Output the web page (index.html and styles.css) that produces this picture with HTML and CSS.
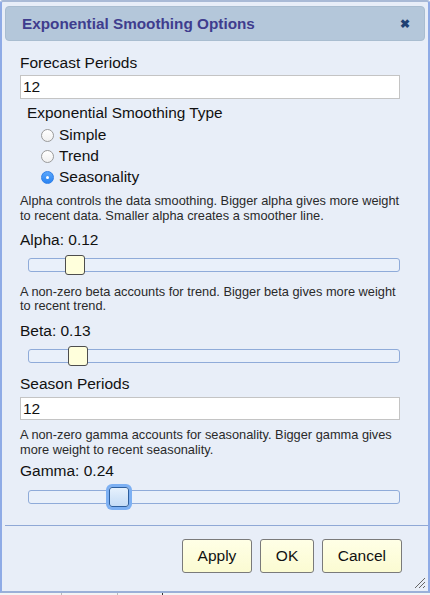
FILE: index.html
```html
<!DOCTYPE html>
<html>
<head>
<meta charset="utf-8">
<link rel="stylesheet" href="styles.css">
</head>
<body>
<div class="dialog">
  <div class="titlebar">
    <span class="title">Exponential Smoothing Options</span>
    <span class="close">&#x2716;</span>
  </div>
  <div class="content">
    <div class="label first">Forecast Periods</div>
    <div class="input">12</div>
    <div class="type-label">Exponential Smoothing Type</div>
    <div class="radios">
      <div class="radio"><span class="circle"></span>Simple</div>
      <div class="radio"><span class="circle"></span>Trend</div>
      <div class="radio"><span class="circle checked"></span>Seasonality</div>
    </div>
    <p class="desc d-alpha">Alpha controls the data smoothing. Bigger alpha gives more weight to recent data. Smaller alpha creates a smoother line.</p>
    <div class="label l-alpha">Alpha: 0.12</div>
    <div class="slider"><div class="track"></div><div class="handle" style="left:37px"></div></div>
    <p class="desc d-beta">A non-zero beta accounts for trend. Bigger beta gives more weight to recent trend.</p>
    <div class="label l-beta">Beta: 0.13</div>
    <div class="slider"><div class="track"></div><div class="handle" style="left:40px"></div></div>
    <div class="label l-season">Season Periods</div>
    <div class="input season">12</div>
    <p class="desc d-gamma">A non-zero gamma accounts for seasonality. Bigger gamma gives more weight to recent seasonality.</p>
    <div class="label l-gamma">Gamma: 0.24</div>
    <div class="slider s-gamma"><div class="track"></div><div class="handle focus" style="left:81px"></div></div>
  </div>
  <div class="footer">
    <button class="btn">Apply</button>
    <button class="btn">OK</button>
    <button class="btn">Cancel</button>
  </div>
  <svg class="grip" width="12" height="12" viewBox="0 0 12 12">
    <line x1="1" y1="11" x2="11" y2="1" stroke="#666" stroke-width="1"/>
    <line x1="5" y1="11" x2="11" y2="5" stroke="#666" stroke-width="1"/>
    <line x1="9" y1="11" x2="11" y2="9" stroke="#666" stroke-width="1"/>
  </svg>
</div>
<div class="page-strip">
  <span class="cell c1"></span><span class="cell c2"></span><span class="cell c3"></span>
</div>
</body>
</html>
```
FILE: styles.css
```css
html, body {
  margin: 0;
  padding: 0;
  background: #ffffff;
}
body {
  font-family: "Liberation Sans", Arial, Helvetica, sans-serif;
  color: #111;
  width: 430px;
  height: 595px;
  overflow: hidden;
}
.dialog {
  position: relative;
  box-sizing: border-box;
  width: 430px;
  height: 593px;
  background: #e8eef8;
  border: 2px solid #8fabe6;
  border-top-color: #a9bad6;
  border-bottom-color: #9bb0d8;
  border-radius: 3px 3px 0 0;
  display: flex;
  flex-direction: column;
}
.titlebar {
  margin: 4px 3px 0 3px;
  height: 35px;
  box-sizing: border-box;
  background: #b4c7da;
  border: 1px solid #a9bdd0;
  border-radius: 4px;
  display: flex;
  align-items: center;
  justify-content: space-between;
  padding: 0 14px 0 16px;
}
.title {
  font-weight: bold;
  font-size: 15.3px;
  color: #3f3d8e;
}
.close {
  font-size: 12px;
  color: #1e4173;
  font-weight: bold;
}
.content {
  padding: 0 28px 0 18px;
  display: flex;
  flex-direction: column;
}
.label {
  font-size: 15.5px;
  line-height: 18px;
  height: 18px;
  color: #111;
}
.label.first { margin-top: 13px; }
.input {
  margin-top: 3px;
  height: 24px;
  box-sizing: border-box;
  background: #fff;
  border: 1px solid #c4c4c4;
  font-size: 15.5px;
  line-height: 22px;
  padding-left: 2px;
}
.input.season {
  margin-top: 3.5px;
  height: 23px;
  line-height: 21px;
}
.type-label {
  margin-top: 5px;
  padding-left: 7px;
  font-size: 15.4px;
  line-height: 18px;
}
.radios {
  margin-top: 2.5px;
  padding-left: 21px;
  display: flex;
  flex-direction: column;
}
.radio {
  height: 21px;
  display: flex;
  align-items: center;
  font-size: 15.5px;
}
.circle {
  width: 13px;
  height: 13px;
  box-sizing: border-box;
  border-radius: 50%;
  border: 1px solid #9a9a9a;
  background: linear-gradient(#ffffff, #f0f0f0);
  margin-right: 5px;
  position: relative;
}
.circle.checked {
  border: 1px solid #2f7fe8;
  background: linear-gradient(#5aa6fb, #2a84f2);
}
.circle.checked::after {
  content: "";
  position: absolute;
  left: 4px;
  top: 4px;
  width: 3px;
  height: 3px;
  border-radius: 50%;
  background: #fff;
}
.desc {
  margin: 0;
  font-size: 12.8px;
  line-height: 15px;
  color: #2a2a2a;
}
.d-alpha { margin-top: 5px; }
.l-alpha { margin-top: 8.5px; }
.d-beta { margin-top: 9.5px; line-height: 14.5px; }
.l-beta { margin-top: 8.5px; }
.l-season { margin-top: 9px; }
.d-gamma { margin-top: 7px; }
.l-gamma { margin-top: 5.5px; }
.slider {
  position: relative;
  margin-top: 6px;
  margin-left: 8px;
  height: 20px;
}
.s-gamma { margin-top: 7px; }
.track {
  position: absolute;
  left: 0;
  right: 0;
  top: 3px;
  height: 14px;
  box-sizing: border-box;
  background: #e9f0fa;
  border: 1px solid #8fabd9;
  border-radius: 3px;
}
.handle {
  position: absolute;
  top: 0;
  width: 20px;
  height: 20px;
  box-sizing: border-box;
  background: #ffffdc;
  border: 1px solid #4d4d4d;
  border-radius: 3px;
}
.handle.focus {
  background: linear-gradient(#e6f1fd, #c5dcf6);
  border: 1px solid #2e5f9e;
  box-shadow: 0 0 0 3px #7db0f3;
}
.footer {
  margin: 18px 0 0 3px;
  border-top: 1px solid #8fa8d6;
  padding: 13px 26px 0 0;
  display: flex;
  justify-content: flex-end;
  gap: 7.5px;
}
.btn {
  font-family: "Liberation Sans", Arial, Helvetica, sans-serif;
  font-size: 15.5px;
  color: #111;
  height: 34px;
  padding: 0 15px;
  background: linear-gradient(#ffffe6, #fbfbd2);
  border: 1px solid #7a7a7a;
  border-radius: 3px;
}
.grip {
  position: absolute;
  right: 2px;
  bottom: 2px;
}
.page-strip {
  height: 2px;
  position: relative;
  background: #f4f4f4;
}
.cell {
  position: absolute;
  top: 0;
  width: 1px;
  height: 2px;
  background: #bbb;
}
.c1 { left: 61px; }
.c2 { left: 117px; }
.c3 { left: 162px; background: #333; }
```
